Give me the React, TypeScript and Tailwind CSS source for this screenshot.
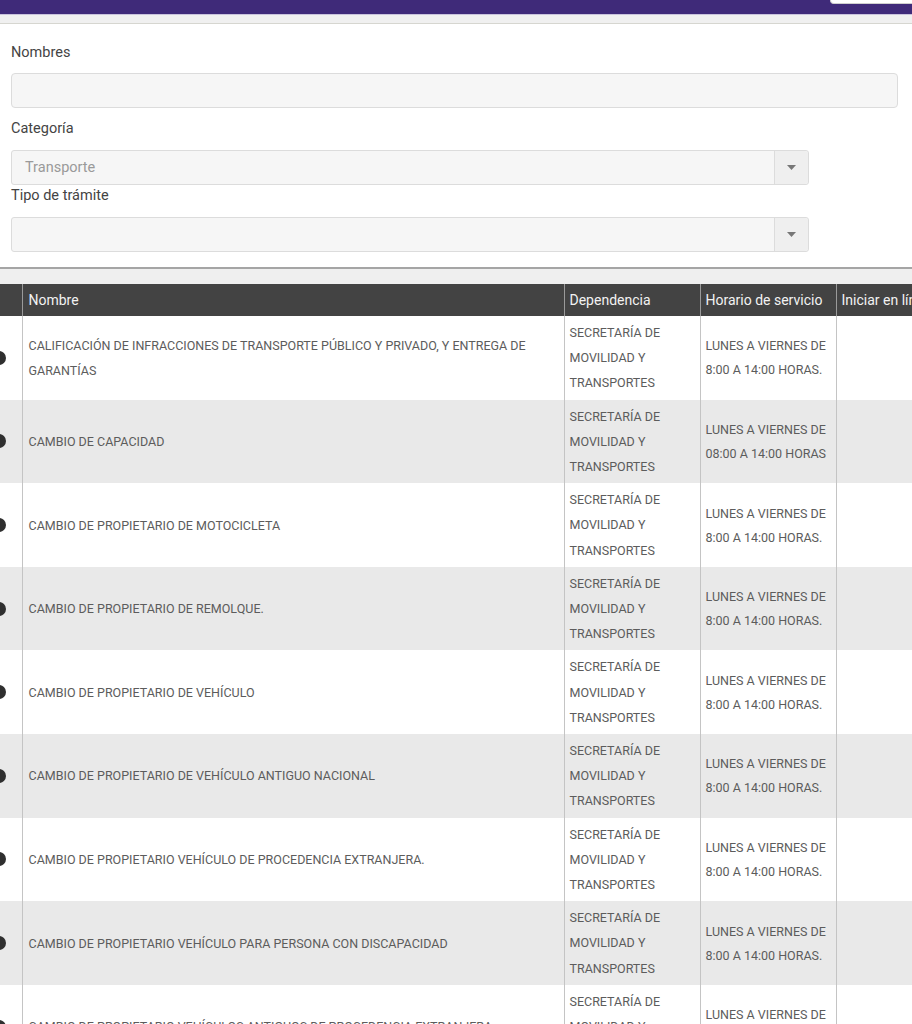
import React from "react";

type Row = { nombre: string[]; horario: string[] };

const rows: Row[] = [
  {
    nombre: [
      "CALIFICACIÓN DE INFRACCIONES DE TRANSPORTE PÚBLICO Y PRIVADO, Y ENTREGA DE",
      "GARANTÍAS",
    ],
    horario: ["LUNES A VIERNES DE", "8:00 A 14:00 HORAS."],
  },
  { nombre: ["CAMBIO DE CAPACIDAD"], horario: ["LUNES A VIERNES DE", "08:00 A 14:00 HORAS"] },
  { nombre: ["CAMBIO DE PROPIETARIO DE MOTOCICLETA"], horario: ["LUNES A VIERNES DE", "8:00 A 14:00 HORAS."] },
  { nombre: ["CAMBIO DE PROPIETARIO DE REMOLQUE."], horario: ["LUNES A VIERNES DE", "8:00 A 14:00 HORAS."] },
  { nombre: ["CAMBIO DE PROPIETARIO DE VEHÍCULO"], horario: ["LUNES A VIERNES DE", "8:00 A 14:00 HORAS."] },
  { nombre: ["CAMBIO DE PROPIETARIO DE VEHÍCULO ANTIGUO NACIONAL"], horario: ["LUNES A VIERNES DE", "8:00 A 14:00 HORAS."] },
  { nombre: ["CAMBIO DE PROPIETARIO VEHÍCULO DE PROCEDENCIA EXTRANJERA."], horario: ["LUNES A VIERNES DE", "8:00 A 14:00 HORAS."] },
  { nombre: ["CAMBIO DE PROPIETARIO VEHÍCULO PARA PERSONA CON DISCAPACIDAD"], horario: ["LUNES A VIERNES DE", "8:00 A 14:00 HORAS."] },
  { nombre: ["CAMBIO DE PROPIETARIO VEHÍCULOS ANTIGUOS DE PROCEDENCIA EXTRANJERA"], horario: ["LUNES A VIERNES DE", "8:00 A 14:00 HORAS."] },
];

function Caret() {
  return (
    <svg width="9" height="5" viewBox="0 0 9 5">
      <path d="M0 0 L9 0 L4.5 5 Z" fill="#777" />
    </svg>
  );
}

function SelectBox({ value }: { value?: string }) {
  return (
    <div className="flex h-[35px] w-[798px] rounded-[3px] border border-[#dcdcdc] bg-[#f6f6f6]">
      <div className="flex flex-1 items-center pl-[13px] text-[14.5px] text-[#9a9a9a]">{value}</div>
      <div className="flex w-[34px] items-center justify-center rounded-r-[3px] border-l border-[#dcdcdc] bg-[#efefef]">
        <Caret />
      </div>
    </div>
  );
}

export default function App() {
  return (
    <div className="relative h-[1024px] w-[912px] overflow-hidden bg-white font-['Roboto',sans-serif]">
      {/* top bar */}
      <div className="relative h-[14px] bg-[#3f2a79]">
        <div className="absolute right-0 top-0 h-[4px] w-[82px] rounded-bl-[4px] border-b border-l border-[#cfcfcf] bg-white" />
      </div>
      <div className="h-[1px] bg-[#c9c3dc]" />
      <div className="h-[9px] border-b border-[#d6d6d0] bg-[#f0f0f0]" />

      {/* form */}
      <div className="px-[11px] pt-[18px] pb-[15px]">
        <div className="pt-[1px] text-[14.5px] leading-[20px] text-[#444]">Nombres</div>
        <div className="mt-[10px] h-[35px] w-[887px] rounded-[4px] border border-[#dcdcdc] bg-[#f6f6f6]" />
        <div className="mt-[10px] pt-[1px] text-[14.5px] leading-[20px] text-[#444]">Categoría</div>
        <div className="mt-[11px]">
          <SelectBox value="Transporte" />
        </div>
        <div className="pt-[1px] text-[14.5px] leading-[20px] text-[#444]">Tipo de trámite</div>
        <div className="mt-[11px]">
          <SelectBox />
        </div>
      </div>

      {/* separator */}
      <div className="h-[2px] bg-[#a5a5a5]" />
      <div className="h-[15px] bg-[#efefef]" />

      {/* table */}
      <table className="w-[1000px] table-fixed border-collapse text-left">
        <colgroup>
          <col className="w-[22px]" />
          <col className="w-[542px]" />
          <col className="w-[136px]" />
          <col className="w-[136px]" />
          <col className="w-[164px]" />
        </colgroup>
        <thead>
          <tr className="h-[32px] bg-[#434343] text-[14px] font-normal text-[#f2f2f2]">
            <th className="border-r border-[#9a9a9a] p-0 font-normal" />
            <th className="border-r border-[#9a9a9a] px-[6px] font-normal">Nombre</th>
            <th className="border-r border-[#9a9a9a] px-[5px] font-normal">Dependencia</th>
            <th className="whitespace-nowrap border-r border-[#9a9a9a] px-[5px] font-normal">Horario de servicio</th>
            <th className="whitespace-nowrap px-[5px] font-normal">Iniciar en línea</th>
          </tr>
        </thead>
        <tbody className="text-[12.5px] text-[#5c5c5c]">
          {rows.map((r, i) => (
            <tr key={i} className={i % 2 === 1 ? "bg-[#e9e9e9]" : "bg-white"}>
              <td className="border-r border-[#c4c4c4] p-0 align-middle">
                <div className="ml-[-8px] h-[14px] w-[14px] rounded-full bg-[#2f2f2f]" />
              </td>
              <td className="border-r border-[#c4c4c4] px-[6px] align-middle leading-[25px]">
                {r.nombre.map((l, j) => (
                  <div key={j} className="whitespace-nowrap">{l}</div>
                ))}
              </td>
              <td className="border-r border-[#c4c4c4] px-[5px] py-[4px] align-middle leading-[25.2px]">
                <div className="whitespace-nowrap">SECRETARÍA DE</div>
                <div className="whitespace-nowrap">MOVILIDAD Y</div>
                <div className="whitespace-nowrap">TRANSPORTES</div>
              </td>
              <td className="border-r border-[#c4c4c4] px-[5px] pt-[1px] align-middle leading-[24px]">
                {r.horario.map((l, j) => (
                  <div key={j} className="whitespace-nowrap">{l}</div>
                ))}
              </td>
              <td />
            </tr>
          ))}
        </tbody>
      </table>
    </div>
  );
}
